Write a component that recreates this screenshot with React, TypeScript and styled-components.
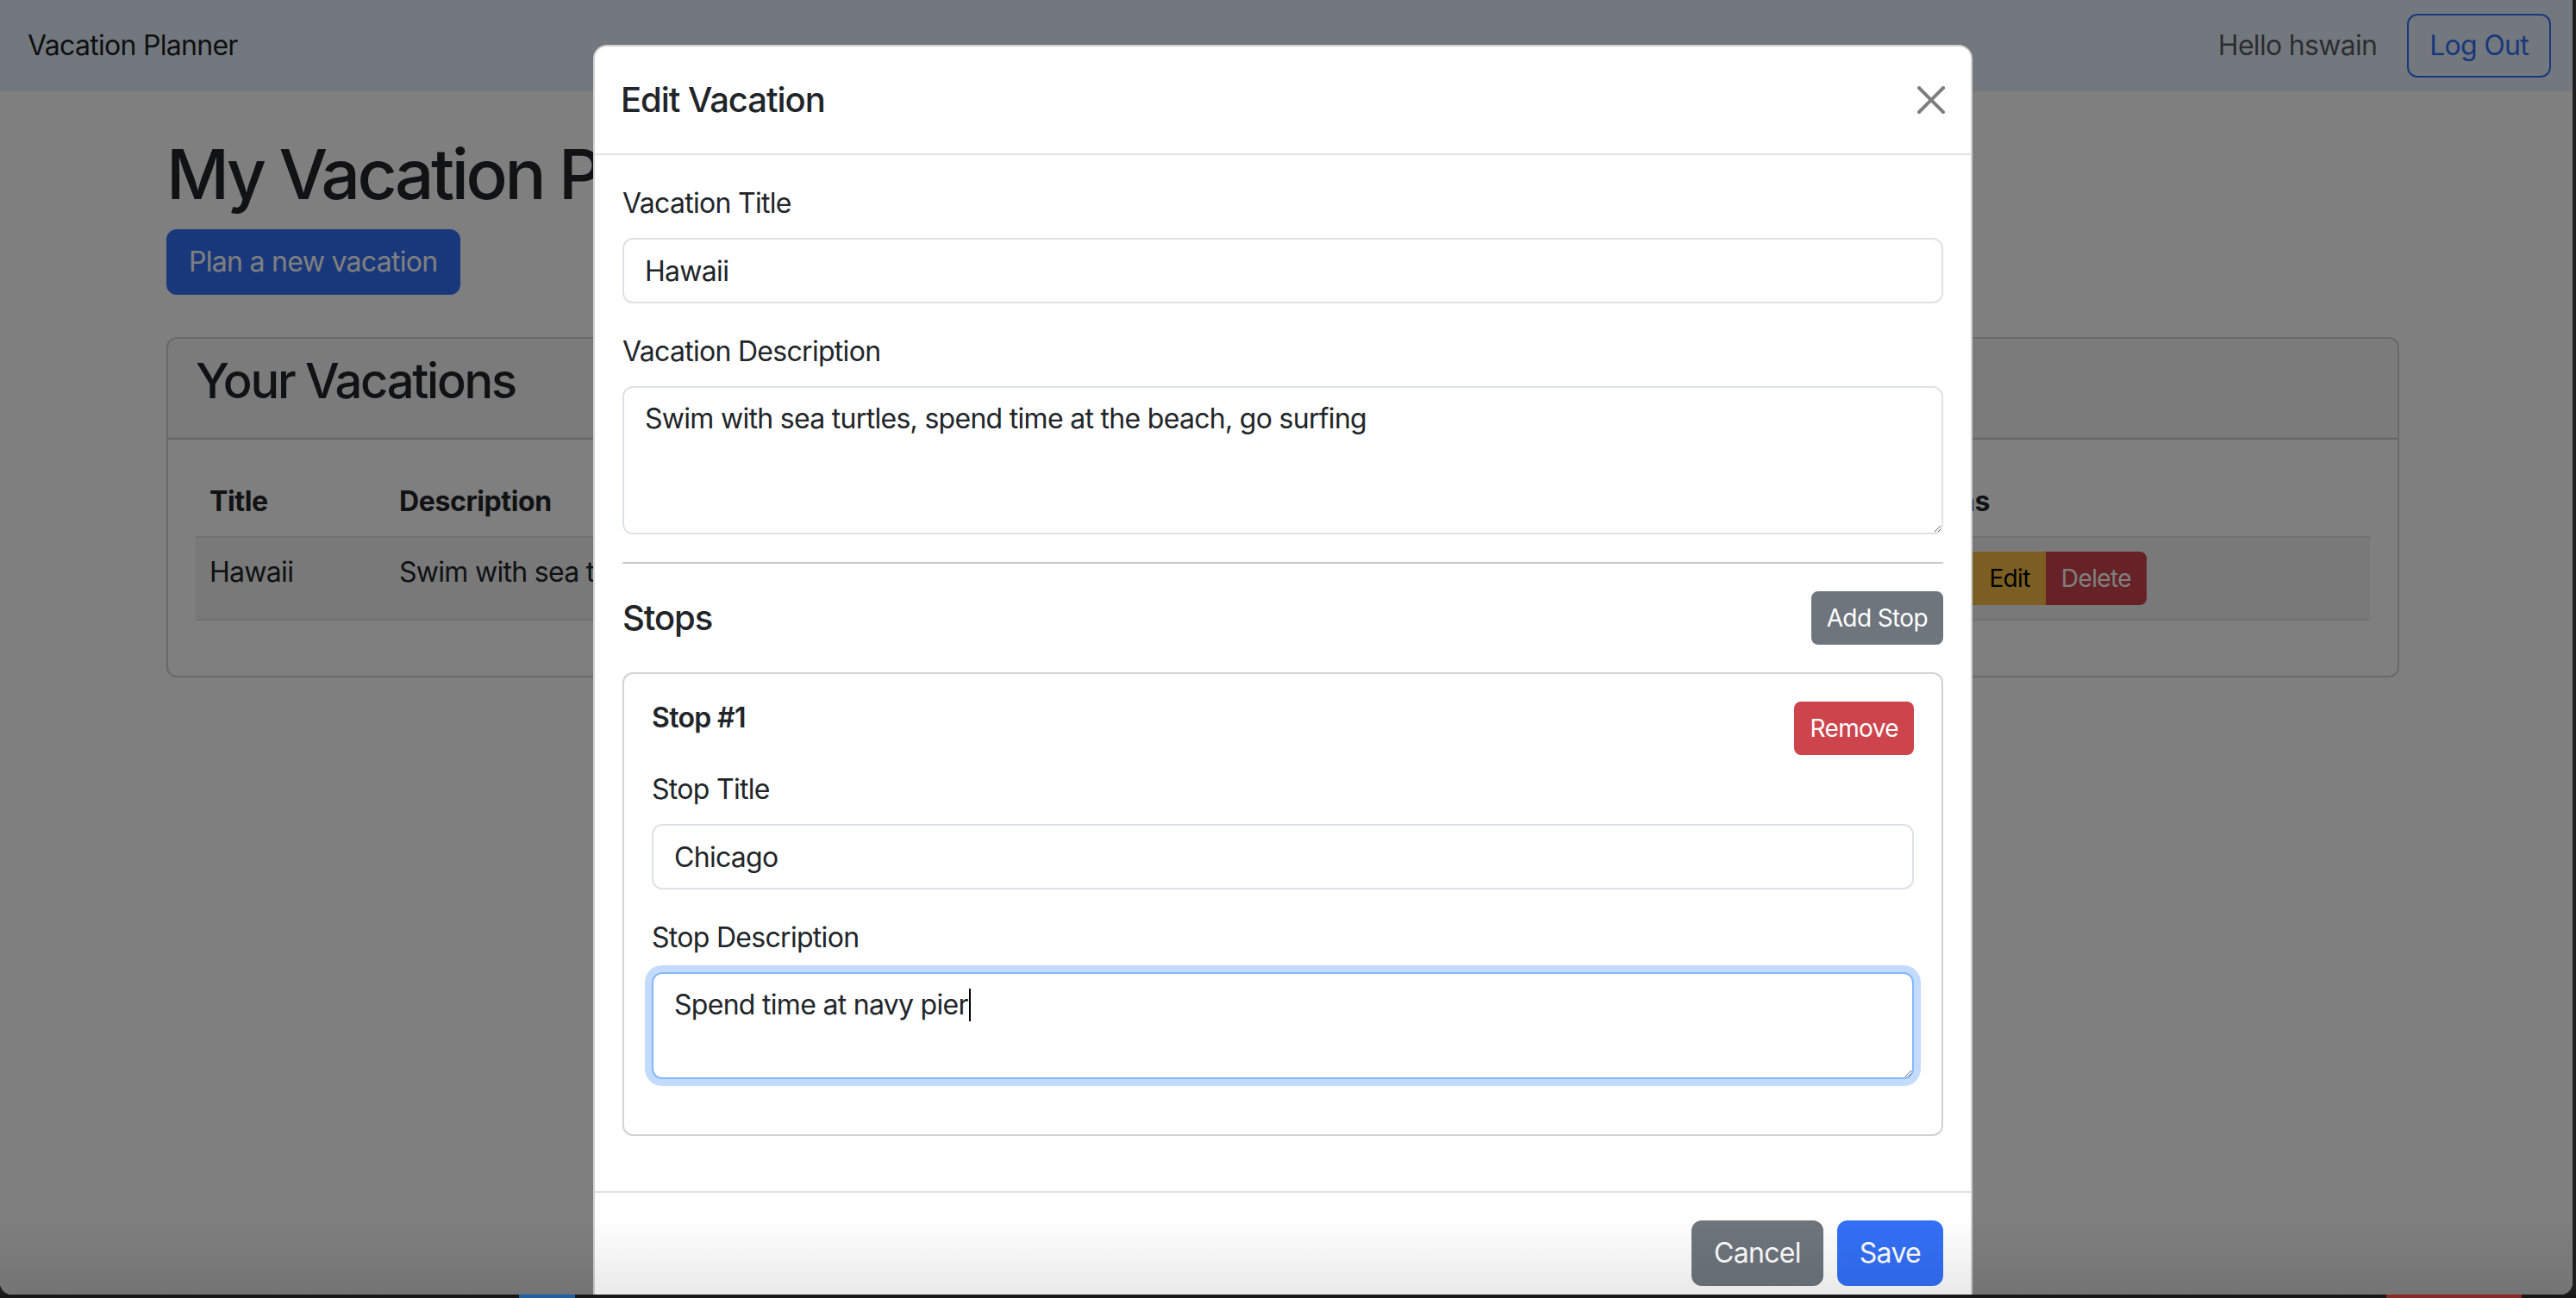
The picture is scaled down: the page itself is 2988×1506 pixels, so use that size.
import React from "react";
import styled, { createGlobalStyle, css } from "styled-components";

const FONT = `Inter, "Noto Sans", "Liberation Sans", sans-serif`;
const TRACK = "-0.022em";

const GlobalStyle = createGlobalStyle`
  *, *::before, *::after { box-sizing: border-box; }
  html, body { margin: 0; padding: 0; }
  body {
    background: #1e1e1e;
    font-family: ${FONT};
    font-size: 32px;
    line-height: 48px;
    letter-spacing: ${TRACK};
    color: #212529;
    overflow: hidden;
  }
`;

const Screen = styled.div`
  width: 2988px;
  height: 1506px;
  display: flex;
  flex-direction: column;
  background: #1e1e1e;
  overflow: hidden;
`;

const Window = styled.div`
  position: relative;
  width: 2984px;
  height: 1502px;
  flex: none;
  background: #ffffff;
  border-radius: 0 0 14px 14px;
  overflow: hidden;
`;

const StatusBar = styled.div`
  height: 4px;
  display: flex;
  background: #181818;
`;

const StatusSeg = styled.div<{ $w: number; $c: string; $ml: number }>`
  width: ${(p) => p.$w}px;
  margin-left: ${(p) => p.$ml}px;
  background: ${(p) => p.$c};
`;

/* ---------- page underneath ---------- */

const Navbar = styled.nav`
  height: 106px;
  display: flex;
  align-items: center;
  justify-content: space-between;
  padding: 0 25px 0 32px;
  background: #e7f0ff;
`;

const Brand = styled.span`
  font-size: 32px;
  line-height: 48px;
  color: rgba(0, 0, 0, 0.9);
`;

const NavRight = styled.div`
  display: flex;
  align-items: center;
  gap: 35px;
`;

const Greeting = styled.span`
  font-size: 32px;
  line-height: 48px;
  color: rgba(0, 0, 0, 0.65);
`;

const variants = {
  primary: { bg: "#3370f7", fg: "#ffffff" },
  secondary: { bg: "#6e757d", fg: "#ffffff" },
  danger: { bg: "#cd444c", fg: "#ffffff" },
  warning: { bg: "#f7bf45", fg: "#000000" },
  info: { bg: "#f7bf45", fg: "#000000" },
};
type Variant = keyof typeof variants;

const OutlineButton = styled.button`
  font-family: ${FONT};
  letter-spacing: ${TRACK};
  font-size: 32px;
  line-height: 48px;
  padding: 11px 24px;
  border: 2px solid ${variants.primary.bg};
  border-radius: 12px;
  color: ${variants.primary.bg};
  background: transparent;
`;

const Main = styled.main`
  width: 2590px;
  margin-left: 193px;
  padding-top: 48px;
`;

const PageTitle = styled.h1`
  margin: 0 0 16px;
  font-size: 80px;
  font-weight: 500;
  line-height: 1.2;
  letter-spacing: -0.043em;
  white-space: nowrap;
`;

const Button = styled.button<{ $v: Variant }>`
  font-family: ${FONT};
  letter-spacing: ${TRACK};
  font-size: 32px;
  line-height: 48px;
  padding: 12px 24px;
  border: 2px solid ${(p) => variants[p.$v].bg};
  border-radius: 12px;
  background: ${(p) => variants[p.$v].bg};
  color: ${(p) => variants[p.$v].fg};
`;

const SmallButton = styled.button<{ $v: Variant; $pos?: "first" | "mid" | "last" | "alone" }>`
  font-family: ${FONT};
  letter-spacing: ${TRACK};
  font-size: 28px;
  line-height: 42px;
  padding: 8px 16px;
  border: 2px solid ${(p) => variants[p.$v].bg};
  background: ${(p) => variants[p.$v].bg};
  color: ${(p) => variants[p.$v].fg};
  ${(p) => {
    switch (p.$pos) {
      case "first":
        return css`border-radius: 8px 0 0 8px;`;
      case "mid":
        return css`border-radius: 0;`;
      case "last":
        return css`border-radius: 0 8px 8px 0;`;
      default:
        return css`border-radius: 8px;`;
    }
  }}
`;

const Card = styled.section`
  margin-top: 49px;
  border: 2px solid rgba(0, 0, 0, 0.175);
  border-radius: 12px;
  overflow: hidden;
`;

const CardHeader = styled.div`
  padding: 16px 32px;
  background: rgba(0, 0, 0, 0.03);
  border-bottom: 2px solid rgba(0, 0, 0, 0.175);
`;

const CardTitle = styled.h3`
  margin: 0 0 16px;
  font-size: 56px;
  font-weight: 500;
  line-height: 1.2;
  letter-spacing: -0.04em;
`;

const CardBody = styled.div`
  padding: 32px;
`;

const Table = styled.table`
  width: 100%;
  border-collapse: collapse;
  margin-bottom: 32px;
  table-layout: fixed;
`;

const Th = styled.th<{ $w?: number }>`
  text-align: left;
  padding: 16px;
  font-size: 32px;
  line-height: 48px;
  font-weight: 700;
  letter-spacing: -0.012em;
  border-bottom: 2px solid #dee2e6;
  vertical-align: bottom;
  white-space: nowrap;
  ${(p) => (p.$w ? css`width: ${p.$w}px;` : "")}
`;

const Tr = styled.tr<{ $striped?: boolean }>`
  background: ${(p) => (p.$striped ? "rgba(0,0,0,0.05)" : "transparent")};
`;

const Td = styled.td`
  padding: 16px;
  font-size: 32px;
  line-height: 48px;
  border-bottom: 2px solid #dee2e6;
  vertical-align: top;
  white-space: nowrap;
  overflow: hidden;
`;

const BtnGroup = styled.div`
  display: inline-flex;
`;

/* ---------- modal ---------- */

const Backdrop = styled.div`
  position: absolute;
  inset: 0;
  background: rgba(0, 0, 0, 0.5);
  display: flex;
  justify-content: center;
  align-items: flex-start;
  padding: 52px 8px 0 0;
`;

const Dialog = styled.div`
  width: 1600px;
  flex: none;
  background: #ffffff;
  border: 2px solid rgba(0, 0, 0, 0.175);
  border-radius: 16px;
  display: flex;
  flex-direction: column;
`;

const ModalHeader = styled.div`
  display: flex;
  align-items: center;
  justify-content: space-between;
  padding: 32px 32px 32px 30px;
  border-bottom: 2px solid #dee2e6;
`;

const ModalTitle = styled.h5`
  margin: 0;
  font-size: 40px;
  font-weight: 500;
  line-height: 1.5;
  letter-spacing: -0.026em;
`;

const CloseButton = styled.button`
  width: 32px;
  height: 32px;
  padding: 0;
  margin-right: -2px;
  border: 0;
  background: transparent;
  opacity: 0.5;
  display: flex;
  svg {
    width: 32px;
    height: 32px;
  }
`;

const ModalBody = styled.div`
  padding: 32px;
`;

const Field = styled.div<{ $mb: number }>`
  margin-bottom: ${(p) => p.$mb}px;
`;

const Label = styled.label`
  display: block;
  margin-bottom: 16px;
  font-size: 32px;
  line-height: 48px;
`;

const controlBase = css<{ $focused?: boolean }>`
  display: block;
  width: 100%;
  font-family: ${FONT};
  letter-spacing: ${TRACK};
  font-size: 32px;
  line-height: 48px;
  padding: 12px 24px;
  color: #212529;
  background: #ffffff;
  border: 2px solid #dee2e6;
  border-radius: 12px;
  outline: none;
  ${(p) =>
    p.$focused &&
    css`
      border-color: #86b7fe;
      box-shadow: 0 0 0 8px rgba(13, 110, 253, 0.25);
    `}
`;

const Input = styled.input<{ $focused?: boolean }>`
  ${controlBase}
  height: 76px;
`;

const TextArea = styled.textarea<{ $focused?: boolean; $rows: number }>`
  ${controlBase}
  height: ${(p) => p.$rows * 48 + 28}px;
  resize: vertical;
`;

const CaretWrap = styled.div`
  position: relative;
`;

const Mirror = styled.div`
  position: absolute;
  inset: 0;
  padding: 14px 26px;
  font-size: 32px;
  line-height: 48px;
  letter-spacing: ${TRACK};
  color: transparent;
  pointer-events: none;
  white-space: pre-wrap;
`;

const Caret = styled.span`
  display: inline-block;
  width: 2px;
  height: 38px;
  margin-left: 1px;
  vertical-align: -8px;
  background: #000000;
`;

const Divider = styled.hr`
  margin: 32px 0;
  border: 0;
  border-top: 2px solid rgba(33, 37, 41, 0.25);
`;

const StopsBar = styled.div`
  display: flex;
  align-items: center;
  justify-content: space-between;
  margin-bottom: 32px;
`;

const StopsTitle = styled.h5`
  margin: 0;
  font-size: 40px;
  font-weight: 500;
  line-height: 1.2;
  letter-spacing: -0.026em;
`;

const StopCard = styled.div`
  border: 2px solid rgba(0, 0, 0, 0.175);
  border-radius: 12px;
  padding: 32px;
  margin-bottom: 32px;
`;

const StopHead = styled.div`
  display: flex;
  align-items: flex-start;
  justify-content: space-between;
  margin-bottom: 16px;
`;

const StopTitle = styled.h6`
  margin: 0;
  font-size: 32px;
  font-weight: 600;
  line-height: 1.2;
  letter-spacing: -0.02em;
`;

const ModalFooter = styled.div`
  display: flex;
  justify-content: flex-end;
  align-items: center;
  padding: 24px;
  border-top: 2px solid #dee2e6;
  ${Button} {
    margin: 8px;
  }
`;

const BottomShade = styled.div`
  position: absolute;
  left: 0;
  right: 0;
  bottom: 0;
  height: 90px;
  pointer-events: none;
  background: linear-gradient(to bottom, rgba(0, 0, 0, 0), rgba(0, 0, 0, 0.085));
`;

const CloseIcon = () => (
  <svg viewBox="0 0 16 16" fill="#000">
    <path d="M.293.293a1 1 0 0 1 1.414 0L8 6.586 14.293.293a1 1 0 1 1 1.414 1.414L9.414 8l6.293 6.293a1 1 0 0 1-1.414 1.414L8 9.414l-6.293 6.293a1 1 0 0 1-1.414-1.414L6.586 8 .293 1.707a1 1 0 0 1 0-1.414z" />
  </svg>
);

export default function App() {
  const stopDesc = "Spend time at navy pier";
  return (
    <>
      <GlobalStyle />
      <Screen>
        <Window>
          <Navbar>
            <Brand>Vacation Planner</Brand>
            <NavRight>
              <Greeting>Hello hswain</Greeting>
              <OutlineButton>Log Out</OutlineButton>
            </NavRight>
          </Navbar>

          <Main>
            <PageTitle>My Vacation Planner</PageTitle>
            <Button $v="primary">Plan a new vacation</Button>
            <Card>
              <CardHeader>
                <CardTitle>Your Vacations</CardTitle>
              </CardHeader>
              <CardBody>
                <Table>
                  <thead>
                    <tr>
                      <Th $w={220}>Title</Th>
                      <Th>Description</Th>
                      <Th $w={574}>Actions</Th>
                    </tr>
                  </thead>
                  <tbody>
                    <Tr $striped>
                      <Td>Hawaii</Td>
                      <Td>Swim with sea turtles, spend time at the beach, go surfing</Td>
                      <Td>
                        <BtnGroup>
                          <SmallButton $v="info" $pos="first">View</SmallButton>
                          <SmallButton $v="warning" $pos="mid">Edit</SmallButton>
                          <SmallButton $v="danger" $pos="last">Delete</SmallButton>
                        </BtnGroup>
                      </Td>
                    </Tr>
                  </tbody>
                </Table>
              </CardBody>
            </Card>
          </Main>

          <Backdrop>
            <Dialog>
              <ModalHeader>
                <ModalTitle>Edit Vacation</ModalTitle>
                <CloseButton aria-label="Close">
                  <CloseIcon />
                </CloseButton>
              </ModalHeader>
              <ModalBody>
                <Field $mb={32}>
                  <Label>Vacation Title</Label>
                  <Input defaultValue="Hawaii" />
                </Field>
                <Field $mb={0}>
                  <Label>Vacation Description</Label>
                  <TextArea
                    $rows={3}
                    defaultValue="Swim with sea turtles, spend time at the beach, go surfing"
                  />
                </Field>
                <Divider />
                <StopsBar>
                  <StopsTitle>Stops</StopsTitle>
                  <SmallButton $v="secondary" $pos="alone">Add Stop</SmallButton>
                </StopsBar>
                <StopCard>
                  <StopHead>
                    <StopTitle>Stop #1</StopTitle>
                    <SmallButton $v="danger" $pos="alone">Remove</SmallButton>
                  </StopHead>
                  <Field $mb={32}>
                    <Label>Stop Title</Label>
                    <Input defaultValue="Chicago" />
                  </Field>
                  <Field $mb={32}>
                    <Label>Stop Description</Label>
                    <CaretWrap>
                      <TextArea $rows={2} $focused defaultValue={stopDesc} />
                      <Mirror>
                        {stopDesc}
                        <Caret />
                      </Mirror>
                    </CaretWrap>
                  </Field>
                </StopCard>
              </ModalBody>
              <ModalFooter>
                <Button $v="secondary">Cancel</Button>
                <Button $v="primary">Save</Button>
              </ModalFooter>
            </Dialog>
          </Backdrop>
          <BottomShade />
        </Window>
        <StatusBar>
          <StatusSeg $ml={602} $w={65} $c="#1f5fa8" />
          <StatusSeg $ml={2101} $w={157} $c="#8b2a24" />
        </StatusBar>
      </Screen>
    </>
  );
}
